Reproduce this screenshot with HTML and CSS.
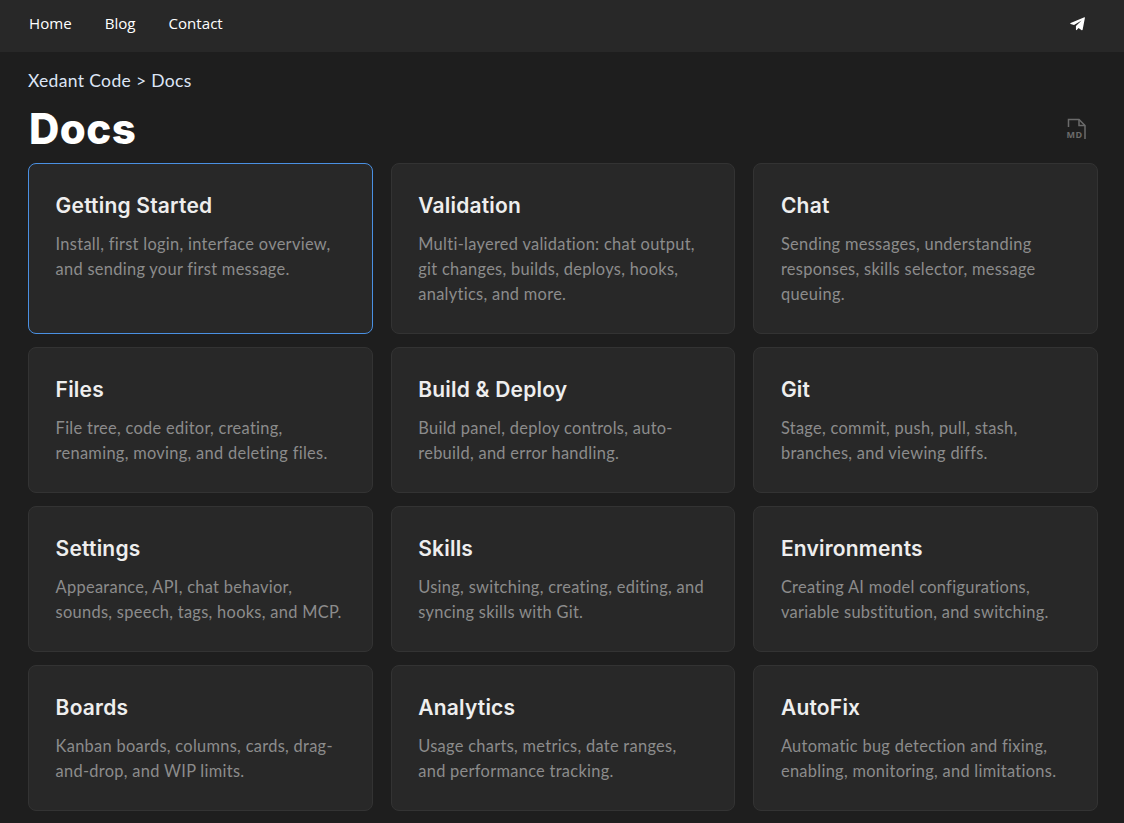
FILE: index.html
```html
<!DOCTYPE html>
<html lang="en">

<head>
  <meta charset="UTF-8">
  <meta name="viewport" content="width=device-width, initial-scale=1.0">
  <title>Docs</title>
  <link rel="stylesheet" href="styles.css">
</head>

<body>
  <nav class="topnav">
    <div class="nav-links">
      <a href="#home">Home</a>
      <a href="#blog">Blog</a>
      <a href="#contact">Contact</a>
    </div>
    <a class="nav-telegram" href="#telegram" aria-label="Telegram">
      <svg width="15" height="15" viewBox="0 0 24 24"><path fill="#fff" d="M23 2 1 11.200c-.8.3-.8 1.200 0 1.500l5.400 1.800L18.500 7 9.500 16v6c0 .6.8.9 1.200.4l3-3.400 5 3.700c.6.400 1.400.1 1.500-.6L23.900 2.800c.1-.7-.4-1-.9-.8z"/></svg>
    </a>
  </nav>

  <main class="content">
    <div class="breadcrumb"><a href="#code">Xedant Code</a> &gt; Docs</div>
    <div class="page-head">
      <h1>Docs</h1>
      <a class="md-link" href="#md" aria-label="View as markdown">
        <svg width="24" height="24" viewBox="0 0 24 24" fill="none" stroke="#6b6b6b" stroke-width="1.500"><path d="M3.500 11V3.500H14l6 6V23"/><path d="M14 3.500v6h6"/><text x="1.500" y="22" class="md-text">MD</text></svg>
      </a>
    </div>

    <div class="card-grid">
      <a class="card card-active" href="#getting-started">
        <h3>Getting Started</h3>
        <p>Install, first login, interface overview, and sending your first message.</p>
      </a>
      <a class="card" href="#validation">
        <h3>Validation</h3>
        <p>Multi-layered validation: chat output, git changes, builds, deploys, hooks, analytics, and more.</p>
      </a>
      <a class="card" href="#chat">
        <h3>Chat</h3>
        <p>Sending messages, understanding responses, skills selector, message queuing.</p>
      </a>
      <a class="card" href="#files">
        <h3>Files</h3>
        <p>File tree, code editor, creating, renaming, moving, and deleting files.</p>
      </a>
      <a class="card" href="#build">
        <h3>Build &amp; Deploy</h3>
        <p>Build panel, deploy controls, auto-rebuild, and error handling.</p>
      </a>
      <a class="card" href="#git">
        <h3>Git</h3>
        <p>Stage, commit, push, pull, stash, branches, and viewing diffs.</p>
      </a>
      <a class="card" href="#settings">
        <h3>Settings</h3>
        <p>Appearance, API, chat behavior, sounds, speech, tags, hooks, and MCP.</p>
      </a>
      <a class="card" href="#skills">
        <h3>Skills</h3>
        <p>Using, switching, creating, editing, and syncing skills with Git.</p>
      </a>
      <a class="card" href="#environments">
        <h3>Environments</h3>
        <p>Creating AI model configurations, variable substitution, and switching.</p>
      </a>
      <a class="card" href="#boards">
        <h3>Boards</h3>
        <p>Kanban boards, columns, cards, drag-and-drop, and WIP limits.</p>
      </a>
      <a class="card" href="#analytics">
        <h3>Analytics</h3>
        <p>Usage charts, metrics, date ranges, and performance tracking.</p>
      </a>
      <a class="card" href="#autofix">
        <h3>AutoFix</h3>
        <p>Automatic bug detection and fixing, enabling, monitoring, and limitations.</p>
      </a>
    </div>
  </main>
</body>

</html>
```

FILE: styles.css
```css
* {
  box-sizing: border-box;
}

html,
body {
  height: 100%;
}

body {
  margin: 0;
  overflow: hidden;
  background: #1e1e1e;
  color: #e8e8e8;
  font-family: "Lato", "Liberation Sans", sans-serif;
}

a {
  color: inherit;
  text-decoration: none;
}

.topnav {
  display: flex;
  align-items: center;
  justify-content: space-between;
  height: 52px;
  padding: 0 39px 6px 29px;
  background: #282828;
}

.nav-links {
  display: flex;
  gap: 33px;
  color: #fff;
  font-family: "Open Sans", sans-serif;
  font-size: 15.100px;
}

.nav-telegram {
  display: flex;
}

.content {
  padding: 16px 26px 0 28px;
}

.breadcrumb {
  height: 25px;
  color: #dde5f5;
  font-size: 17.500px;
  letter-spacing: 0.35px;
  line-height: 25px;
}

.page-head {
  display: flex;
  align-items: center;
  justify-content: space-between;
  height: 70px;
  padding: 0 9px 0 1px;
}

.page-head h1 {
  margin: 0;
  color: #fff;
  font-family: "Inter", sans-serif;
  font-size: 42px;
  font-weight: 800;
  letter-spacing: 0.5px;
}

.md-link {
  display: flex;
}

.md-text {
  fill: #6b6b6b;
  stroke: none;
  font-family: "Open Sans", sans-serif;
  font-size: 9px;
  font-weight: 700;
  letter-spacing: 0.4px;
}

.card-grid {
  display: grid;
  grid-template-columns: repeat(3, 1fr);
  grid-template-rows: 171px 146px 146px 146px;
  column-gap: 18px;
  row-gap: 13px;
}

.card {
  padding: 28px 27px 26px 26.600px;
  border: 1px solid #333;
  border-radius: 8px;
  background: #282828;
}

.card-active {
  border-color: #4a90e2;
}

.card h3 {
  margin: 0 0 11px;
  color: #eee;
  font-family: "Inter", sans-serif;
  font-size: 21px;
  font-weight: 600;
  letter-spacing: 0.2px;
  line-height: 28px;
}

.card p {
  margin: 0;
  color: #8c8c8c;
  font-size: 16.400px;
  letter-spacing: 0.3px;
  line-height: 25px;
}
```
